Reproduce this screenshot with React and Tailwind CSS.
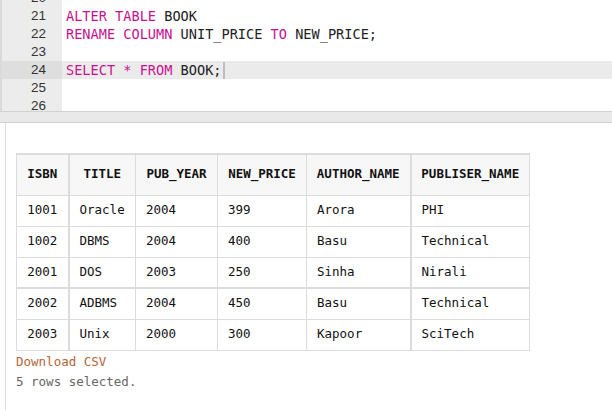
import React from "react";

const lines = [
  { n: 20, code: null },
  { n: 21, code: [["k", "ALTER TABLE "], ["t", "BOOK"]] },
  { n: 22, code: [["k", "RENAME COLUMN "], ["t", "UNIT_PRICE "], ["k", "TO "], ["t", "NEW_PRICE;"]] },
  { n: 23, code: null },
  { n: 24, code: [["k", "SELECT * FROM "], ["t", "BOOK;"]], active: true },
  { n: 25, code: null },
  { n: 26, code: null },
];

const cols = [
  { name: "ISBN", w: "w-[52px]" },
  { name: "TITLE", w: "w-[67px]" },
  { name: "PUB_YEAR", w: "w-[82px]" },
  { name: "NEW_PRICE", w: "w-[89px]" },
  { name: "AUTHOR_NAME", w: "w-[104px]" },
  { name: "PUBLISER_NAME", w: "w-[119px]" },
];

const rows = [
  ["1001", "Oracle", "2004", "399", "Arora", "PHI"],
  ["1002", "DBMS", "2004", "400", "Basu", "Technical"],
  ["2001", "DOS", "2003", "250", "Sinha", "Nirali"],
  ["2002", "ADBMS", "2004", "450", "Basu", "Technical"],
  ["2003", "Unix", "2000", "300", "Kapoor", "SciTech"],
];

const mono = "font-['DejaVu_Sans_Mono',monospace]";

const App = () => {
  return (
    <div className="w-[612px] h-[410px] overflow-hidden bg-white flex flex-col">
      <div className="h-[111px] overflow-hidden shrink-0">
        <div className="-mt-[11px]">
          {lines.map((line) => (
            <div key={line.n} className={`flex h-[18px] ${line.active ? "bg-[#ebebeb]" : ""}`}>
              <div
                className={`w-[62px] shrink-0 border-l-2 border-[#dadada] pr-[16px] text-right text-[13.5px] leading-[18px] text-[#333] font-['Liberation_Sans',sans-serif] ${
                  line.active ? "bg-[#dedede]" : "bg-[#ececec]"
                }`}
              >
                {line.n}
              </div>
              <div className={`pl-[4px] text-[13.6px] leading-[18px] whitespace-pre ${mono} flex items-center`}>
                {line.code &&
                  line.code.map(([kind, text], i) => (
                    <span key={i} className={kind === "k" ? "text-[#c8118e]" : "text-[#222]"}>
                      {text}
                    </span>
                  ))}
                {line.active && <span className="ml-[1px] h-[17px] w-[2px] bg-[#bdbdbd]" />}
              </div>
            </div>
          ))}
        </div>
      </div>

      <div className="h-[12px] shrink-0 border-y border-[#d2d2d2] bg-[#e9e9e9]" />

      <div className="flex-1 border-l border-[#dedede] ml-[5px] pl-[10px] pt-[30px]">
        <table className={`table-fixed border-collapse w-[514px] text-[12.5px] text-[#111] ${mono}`}>
          <thead>
            <tr className="bg-[#f7f7f7] border-t-2 border-[#dcdcdc]">
              {cols.map((c, i) => (
                <th
                  key={c.name}
                  className={`${c.w} h-[41px] border border-[#dcdcdc] ${
                    i === 0 || i === 4 ? "border-r-2" : ""
                  } font-bold text-center p-0`}
                >
                  {c.name}
                </th>
              ))}
            </tr>
          </thead>
          <tbody>
            {rows.map((row, r) => (
              <tr key={r} className={r === 3 ? "border-t-2 border-[#dcdcdc]" : ""}>
                {row.map((cell, i) => (
                  <td
                    key={i}
                    className={`h-[31px] border border-[#dcdcdc] ${
                      i === 0 || i === 4 ? "border-r-2" : ""
                    } ${i === 0 ? "text-center" : "text-left pl-[10px]"} p-0`}
                  >
                    {cell}
                  </td>
                ))}
              </tr>
            ))}
          </tbody>
        </table>
        <div className={`${mono} text-[12.5px] leading-[20px] mt-[1px]`}>
          <div className="text-[#b3653a]">Download CSV</div>
          <div className="text-[#666]">5 rows selected.</div>
        </div>
      </div>
    </div>
  );
};

export default App;
